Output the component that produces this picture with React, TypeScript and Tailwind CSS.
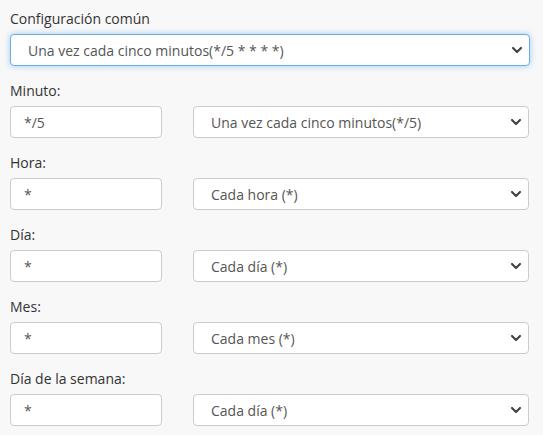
import { ChevronDown } from "lucide-react";

const ROWS = [
  { label: "Minuto:", value: "*/5", option: "Una vez cada cinco minutos(*/5)" },
  { label: "Hora:", value: "*", option: "Cada hora (*)" },
  { label: "Día:", value: "*", option: "Cada día (*)" },
  { label: "Mes:", value: "*", option: "Cada mes (*)" },
  { label: "Día de la semana:", value: "*", option: "Cada día (*)" },
];

function SelectBox({ value, className, focused }: { value: string; className: string; focused?: boolean }) {
  return (
    <div className={`relative ${className}`}>
      <select
        defaultValue={value}
        className={`h-8 w-full appearance-none rounded bg-white pl-[17px] pr-8 text-[14px] text-[#555] outline-none ${
          focused
            ? "border border-[#66afe9] shadow-[0_0_6px_rgba(102,175,233,0.6)]"
            : "border border-[#ccc]"
        }`}
      >
        <option value={value}>{value}</option>
      </select>
      <ChevronDown
        className="pointer-events-none absolute right-[5px] top-1/2 h-4 w-4 -translate-y-1/2 text-[#444]"
        strokeWidth={3.2}
      />
    </div>
  );
}

export default function App() {
  return (
    <div
      className="min-h-[435px] w-[543px] bg-[#f8f8f8] pl-[10px] pt-[9px] text-[14px] text-[#333]"
      style={{ fontFamily: '"Open Sans", sans-serif' }}
    >
      <label className="block h-5 leading-5">Configuración común</label>
      <SelectBox value="Una vez cada cinco minutos(*/5 * * * *)" className="mt-[5px] w-[520px]" focused />
      {ROWS.map((r) => (
        <div key={r.label} className="mt-[15px]">
          <label className="block h-5 leading-5">{r.label}</label>
          <div className="mt-[5px] flex gap-[31px]">
            <input
              defaultValue={r.value}
              className="h-8 w-[152px] rounded border border-[#ccc] bg-white px-[13px] text-[14px] text-[#555] outline-none"
            />
            <SelectBox value={r.option} className="w-[336px]" />
          </div>
        </div>
      ))}
    </div>
  );
}
